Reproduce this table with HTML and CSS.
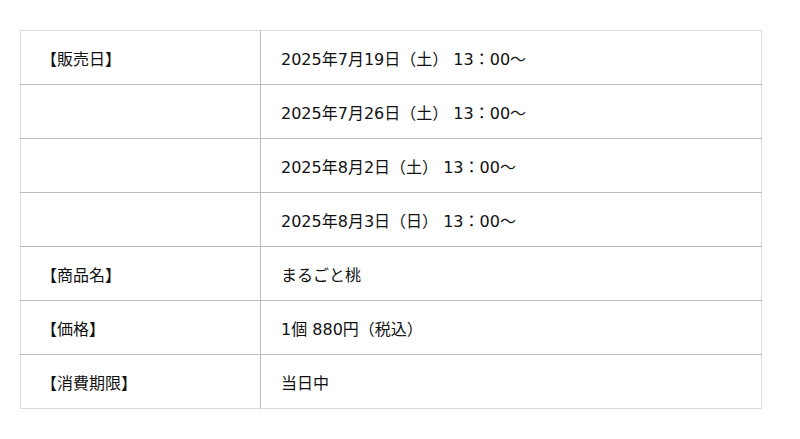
FILE: index.html
```html
<!DOCTYPE html>
<html lang="ja">
<head>
<meta charset="utf-8">
<link rel="stylesheet" href="styles.css">
</head>
<body>
<div class="wrap">
<table class="info">
<tr><th>【販売日】</th><td>2025年7月19日（土） 13：00～</td></tr>
<tr><th></th><td>2025年7月26日（土） 13：00～</td></tr>
<tr><th></th><td>2025年8月2日（土） 13：00～</td></tr>
<tr><th></th><td>2025年8月3日（日） 13：00～</td></tr>
<tr><th>【商品名】</th><td>まるごと桃</td></tr>
<tr><th>【価格】</th><td>1個 880円（税込）</td></tr>
<tr><th>【消費期限】</th><td>当日中</td></tr>
</table>
</div>
</body>
</html>
```
FILE: styles.css
```css
html, body {
  margin: 0;
  padding: 0;
  background: #fff;
}
.wrap {
  padding: 30px 20px;
}
.info {
  width: 742px;
  border-collapse: collapse;
  font-family: "DejaVu Sans", "Noto Sans CJK JP", sans-serif;
  font-size: 16px;
  color: #111;
  border: 1px solid #ddd;
}
.info th, .info td {
  height: 53px;
  padding: 0 20px;
  text-align: left;
  font-weight: normal;
  border-top: 1px solid #bbb;
  vertical-align: middle;
}
.info tr:first-child th, .info tr:first-child td {
  border-top: 1px solid #ddd;
}
.info th {
  width: 199px;
  border-right: 1px solid #bbb;
}
```
